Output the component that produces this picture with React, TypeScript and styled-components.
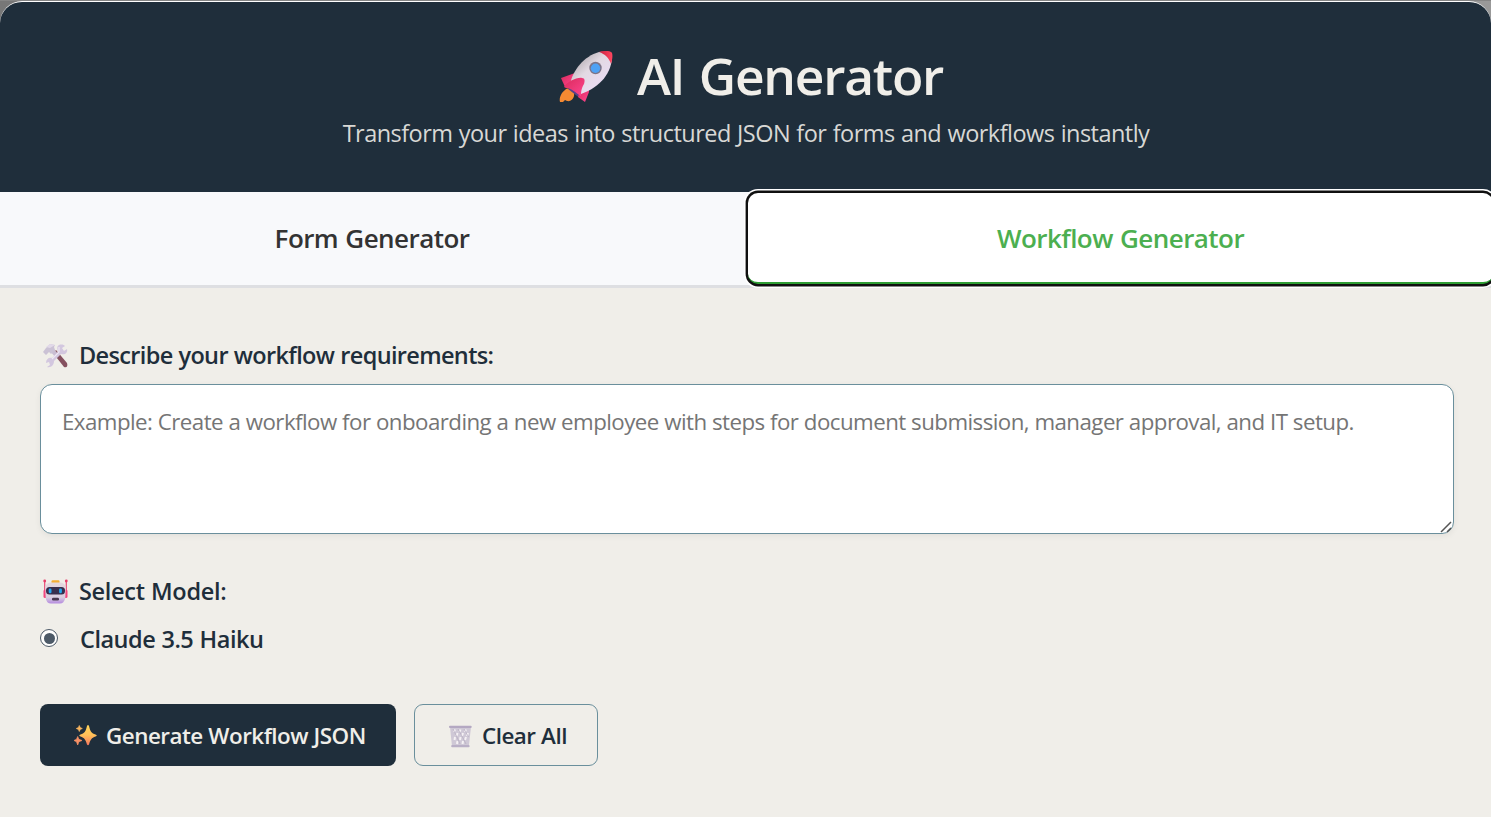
import React from 'react';
import styled, { createGlobalStyle } from 'styled-components';

const Global = createGlobalStyle`
  *, *::before, *::after { box-sizing: border-box; }
  body { margin: 0; height: 817px; overflow: hidden; background: #858585; font-family: 'Open Sans', 'Noto Sans', sans-serif; }
`;

const Card = styled.main`
  display: flex;
  flex-direction: column;
  height: 817px;
  border-top: 1px solid #858585;
  background: linear-gradient(90deg, #777, #999);
`;

const Header = styled.header`
  display: flex;
  flex-direction: column;
  align-items: center;
  height: 191px;
  padding: 38px 0 0 1px;
  border-top: 1px solid #fff;
  border-radius: 22px 22px 0 0;
  background: #1f2e3b;
`;

const Title = styled.h1`
  display: flex;
  align-items: center;
  gap: 24px;
  height: 70px;
  margin: 0;
  padding-left: 10px;
  color: #f0eee9;
  font-size: 51.5px;
  font-weight: 600;
  line-height: 70px;
  letter-spacing: -1.25px;
  word-spacing: 2.5px;
  white-space: nowrap;

  svg { margin-top: 4px; }
`;

const Subtitle = styled.p`
  margin: 7px 0 0;
  color: #d8d8d5;
  font-size: 23.5px;
  line-height: 33px;
  letter-spacing: -0.53px;
  word-spacing: 0.7px;
  white-space: nowrap;
`;

const Tabs = styled.nav`
  display: grid;
  grid-template-columns: 748px 745px;
  height: 96px;
  border-bottom: 3px solid #dedfe2;
  background: #f8f9fb;
`;

const Tab = styled.button<{ $active?: boolean }>`
  position: relative;
  height: ${p => (p.$active ? '91px' : '93px')};
  margin-top: ${p => (p.$active ? '1px' : '0')};
  padding: ${p => (p.$active ? '1px 0 0' : '0 4px 2px 0')};
  border: 0;
  border-bottom: ${p => (p.$active ? '2px solid #2f9e34' : '0')};
  border-radius: ${p => (p.$active ? '10px' : '0')};
  background: ${p => (p.$active ? '#fff' : 'transparent')};
  box-shadow: ${p => (p.$active ? '0 0 0 2.4px #101010, 0 0 0 4px #fff' : 'none')};
  color: ${p => (p.$active ? '#4caf50' : '#333')};
  font: 600 26px/36px 'Open Sans', sans-serif;
  letter-spacing: -0.55px;
  word-spacing: 1px;
`;

const Form = styled.form`
  display: flex;
  flex: 1;
  flex-direction: column;
  align-items: flex-start;
  padding: 50px 37px 0 40px;
  background: #f0eee9;
  color: #1f2e3b;
`;

const Label = styled.label<{ $top?: number; $tracking?: number }>`
  display: flex;
  align-items: center;
  gap: 10px;
  height: 34px;
  margin-top: ${p => p.$top ?? 0}px;
  padding-left: 2px;
  font-size: 23.5px;
  font-weight: 600;
  letter-spacing: ${p => p.$tracking ?? -0.65}px;
  word-spacing: 0.5px;
  white-space: nowrap;

  svg { margin-top: 1px; }
`;

const FieldWrap = styled.div`
  position: relative;
  width: 1414px;
  height: 150px;
  margin-top: 12px;
`;

const Field = styled.textarea`
  display: block;
  width: 100%;
  height: 100%;
  padding: 21px 21px 20px;
  border: 1px solid #6a8f9c;
  border-radius: 12px;
  outline: none;
  resize: none;
  overflow: hidden;
  background: #fff;
  box-shadow: 0 2px 6px rgba(0, 0, 0, 0.06);
  font: 400 22.3px/32px 'Open Sans', sans-serif;
  letter-spacing: -0.55px;
  word-spacing: 0.2px;
  &::placeholder { color: #757575; opacity: 1; }
`;

const Grip = styled.svg`
  position: absolute;
  right: 1px;
  bottom: 0;
`;

const Option = styled.label`
  display: flex;
  align-items: center;
  gap: 22px;
  height: 34px;
  margin-top: 14px;
  font-size: 23.5px;
  font-weight: 600;
  letter-spacing: -0.5px;
  word-spacing: 0.7px;
`;

const Radio = styled.span`
  display: grid;
  place-items: center;
  width: 18px;
  height: 18px;
  margin-top: -2px;
  border: 1.5px solid #4d5a68;
  border-radius: 50%;
  background: #fff;
  &::after { content: ''; width: 11px; height: 11px; border-radius: 50%; background: #4d5a68; }
`;

const Actions = styled.div`
  display: flex;
  gap: 18px;
  margin-top: 48px;
`;

const Button = styled.button<{ $primary?: boolean }>`
  display: flex;
  align-items: center;
  gap: ${p => (p.$primary ? 8 : 10)}px;
  width: ${p => (p.$primary ? 356 : 184)}px;
  height: 62px;
  padding: 2px 0 0 33px;
  border: ${p => (p.$primary ? '0' : '1px solid #6a8f9c')};
  border-radius: ${p => (p.$primary ? 8 : 9)}px;
  background: ${p => (p.$primary ? '#1f2e3b' : 'transparent')};
  color: ${p => (p.$primary ? '#f0eee9' : '#1f2e3b')};
  font: 600 22.4px/32px 'Open Sans', sans-serif;
  letter-spacing: -0.49px;
  word-spacing: 0.2px;
  white-space: nowrap;
`;

const Rocket = () => (
  <svg width="54" height="52" viewBox="0 0 54 52">
    <defs>
      <linearGradient id="hull" x1="0.2" y1="0.2" x2="0.75" y2="0.8">
        <stop offset="0" stopColor="#b9b2b8" /><stop offset="0.4" stopColor="#e2d9e2" /><stop offset="1" stopColor="#eadcf3" />
      </linearGradient>
      <linearGradient id="fin" x1="0" y1="0" x2="1" y2="1">
        <stop offset="0" stopColor="#d92b5c" /><stop offset="1" stopColor="#ff4590" />
      </linearGradient>
      <linearGradient id="nose"><stop offset="0" stopColor="#c9203f" /><stop offset="1" stopColor="#ff4760" /></linearGradient>
    </defs>
    <path d="M6 39C9 36 13 38 15 42C16 47 12 51 8 50L6 49L4 51L1 51C0 47 2 42 6 39Z" fill="#f58a32" />
    <path d="M9 38L13 35L25 46L22 48Z" fill="#58418a" />
    <path d="M16 22L2 27L6 36L12 37Z" fill="url(#fin)" />
    <path d="M30 38L30 41L26 51L19 46L22 37Z" fill="url(#fin)" />
    <path d="M11 34C13 20 25 5 40 1C47 0 53 1 53 5C53 21 42 36 22 43L20 43Z" fill="url(#hull)" />
    <path d="M40 1C47-1 52 0 53 2C54 5 53 10 52 13C50 7 46 3 40 1Z" fill="url(#nose)" />
    <path d="M5 36C8 31 18 26 23 27C26 27 26 30 25 33C22 38 22 42 22 45C17 42 11 36 7 37Z" fill="url(#fin)" />
    <circle cx="36.5" cy="17" r="6.2" fill="#7c7488" /><circle cx="36.5" cy="17.3" r="4.7" fill="#4ea2f5" />
  </svg>
);

const Tools = () => (
  <svg width="27" height="26" viewBox="0 0 27 26">
    <path d="M11 10L14 7L25 20C26 23 25 25 22 24Z" fill="#85505f" />
    <path d="M8 8L11 5L17 12L14 15Z" fill="#c9bdd2" />
    <path d="M1 9L4 5L8 1L13 2L12 4L13 7L9 11L7 9L4 12Z" fill="#cbc2d5" />
    <path d="M4 4L8 1L13 2L8 5Z" fill="#e2d9e9" />
    <path d="M17 2C20 1 22 2 23 3L20 5L22 8L25 6C26 10 23 12 19 11L12 18C12 22 9 25 5 24L8 22L7 19L4 20C4 16 7 14 10 15L16 9C15 5 15 3 17 2Z" fill="#d3c7df" />
    <path d="M17 4L17 9L10 16" fill="none" stroke="#eee6f4" strokeWidth="1.2" />
  </svg>
);

const Robot = () => (
  <svg width="27" height="26" viewBox="0 0 27 26">
    <defs><linearGradient id="face" x2="0" y2="1"><stop stopColor="#e4d8df" /><stop offset="0.7" stopColor="#dacfe0" /><stop offset="1" stopColor="#b58bdf" /></linearGradient></defs>
    <path d="M2.700 2V14M24.300 2V14" stroke="#e84b78" strokeWidth="1.2" />
    <circle cx="2.700" cy="2" r="1.400" fill="#e63d69" /><circle cx="24.300" cy="2" r="1.400" fill="#e63d69" />
    <rect x="1.500" y="10.500" width="5" height="8.500" rx="1.500" fill="#f3477f" /><rect x="20.500" y="10.500" width="5" height="8.500" rx="1.500" fill="#f3477f" />
    <rect x="9.500" y="1.300" width="8" height="4" rx="1.200" fill="#f3ae35" />
    <path d="M8.500 3.500H18.500Q23.500 4 23.700 9L23.300 19Q22 24.500 18 24.500H9Q4.500 24.500 3.700 19L3.300 9Q3.500 4 8.500 3.500Z" fill="url(#face)" />
    <rect x="4" y="8" width="19" height="7.500" rx="3.500" fill="#382f4d" />
    <rect x="6.700" y="9.500" width="2.800" height="4.800" rx="1.200" fill="#24a6ee" /><rect x="17.100" y="9.500" width="2.800" height="4.800" rx="1.200" fill="#24a6ee" />
    <rect x="10" y="18.800" width="7" height="2.700" rx="1.300" fill="#49384f" />
  </svg>
);

const Sparkles = () => (
  <svg width="25" height="24" viewBox="0 0 25 24">
    <defs><linearGradient id="spark" x2="0" y2="1"><stop stopColor="#ffd45b" /><stop offset="0.5" stopColor="#ffc058" /><stop offset="1" stopColor="#f5755f" /></linearGradient></defs>
    <path d="M14 2Q15 0 16 2C17.500 8 18.500 9 22.500 10.500Q25 11.500 22.500 12.500C18.500 14 17.500 15.500 16 20.500Q15 22 14 20.500C12.500 15.500 11.500 14 7.500 12.500Q5 11.500 7.500 10.500C11.500 9 12.500 8 14 2Z" fill="url(#spark)" />
    <path d="M6.300 1.500L7.200 3.600L9.300 4.500L7.200 5.400L6.300 7.500L5.400 5.400L3.300 4.500L5.400 3.600Z" fill="#f7b45e" stroke="#f7b45e" strokeWidth="0.7" />
    <path d="M4.700 12.500L5.900 15.300L9 16.500L5.900 17.700L4.700 21L3.500 17.700L1 16.500L3.500 15.300Z" fill="#f79166" stroke="#f79166" strokeWidth="0.7" />
  </svg>
);

const Bin = () => (
  <svg width="24" height="23" viewBox="0 0 24 23">
    <path d="M2 2H23L20.800 21.500H4Z" fill="#cfc8d6" />
    <path d="M7 4.500L6 7M12.500 4.500L11.500 7M18 4.500L17 7M9.500 8L8.500 11M15 8L14 11M20 8L19 11M7 12L6.500 15M12.500 12L12 15M18 12L17 15M9.500 16L9 19M15 16L14.500 19" fill="none" stroke="#f5f1f4" strokeWidth="2" />
    <path d="M5 4L8.500 11L12 19M10 4L15 13L18 19M16 4L20.500 12" fill="none" stroke="#b5acbf" strokeWidth="0.7" />
    <rect x="1" y="0.700" width="22.700" height="2.300" rx="1" fill="#b4a8c2" /><rect x="3.200" y="20" width="18.400" height="2.300" rx="1" fill="#b9afc6" />
  </svg>
);

export default function App() {
  return (
    <>
      <Global />
      <Card>
        <Header>
          <Title><Rocket /><span>AI Generator</span></Title>
          <Subtitle>Transform your ideas into structured JSON for forms and workflows instantly</Subtitle>
        </Header>
        <Tabs>
          <Tab type="button">Form Generator</Tab>
          <Tab type="button" $active>Workflow Generator</Tab>
        </Tabs>
        <Form>
          <Label htmlFor="requirements"><Tools /><span>Describe your workflow requirements:</span></Label>
          <FieldWrap>
            <Field id="requirements" placeholder="Example: Create a workflow for onboarding a new employee with steps for document submission, manager approval, and IT setup." />
            <Grip width="14" height="14" viewBox="0 0 14 14"><path d="M2 12L12 2M8 12L12 8" stroke="#555" strokeWidth="1.5" /></Grip>
          </FieldWrap>
          <Label as="div" $top={40} $tracking={-0.3}><Robot /><span>Select Model:</span></Label>
          <Option><Radio /><span>Claude 3.5 Haiku</span></Option>
          <Actions>
            <Button type="button" $primary><Sparkles /><span>Generate Workflow JSON</span></Button>
            <Button type="button"><Bin /><span>Clear All</span></Button>
          </Actions>
        </Form>
      </Card>
    </>
  );
}
